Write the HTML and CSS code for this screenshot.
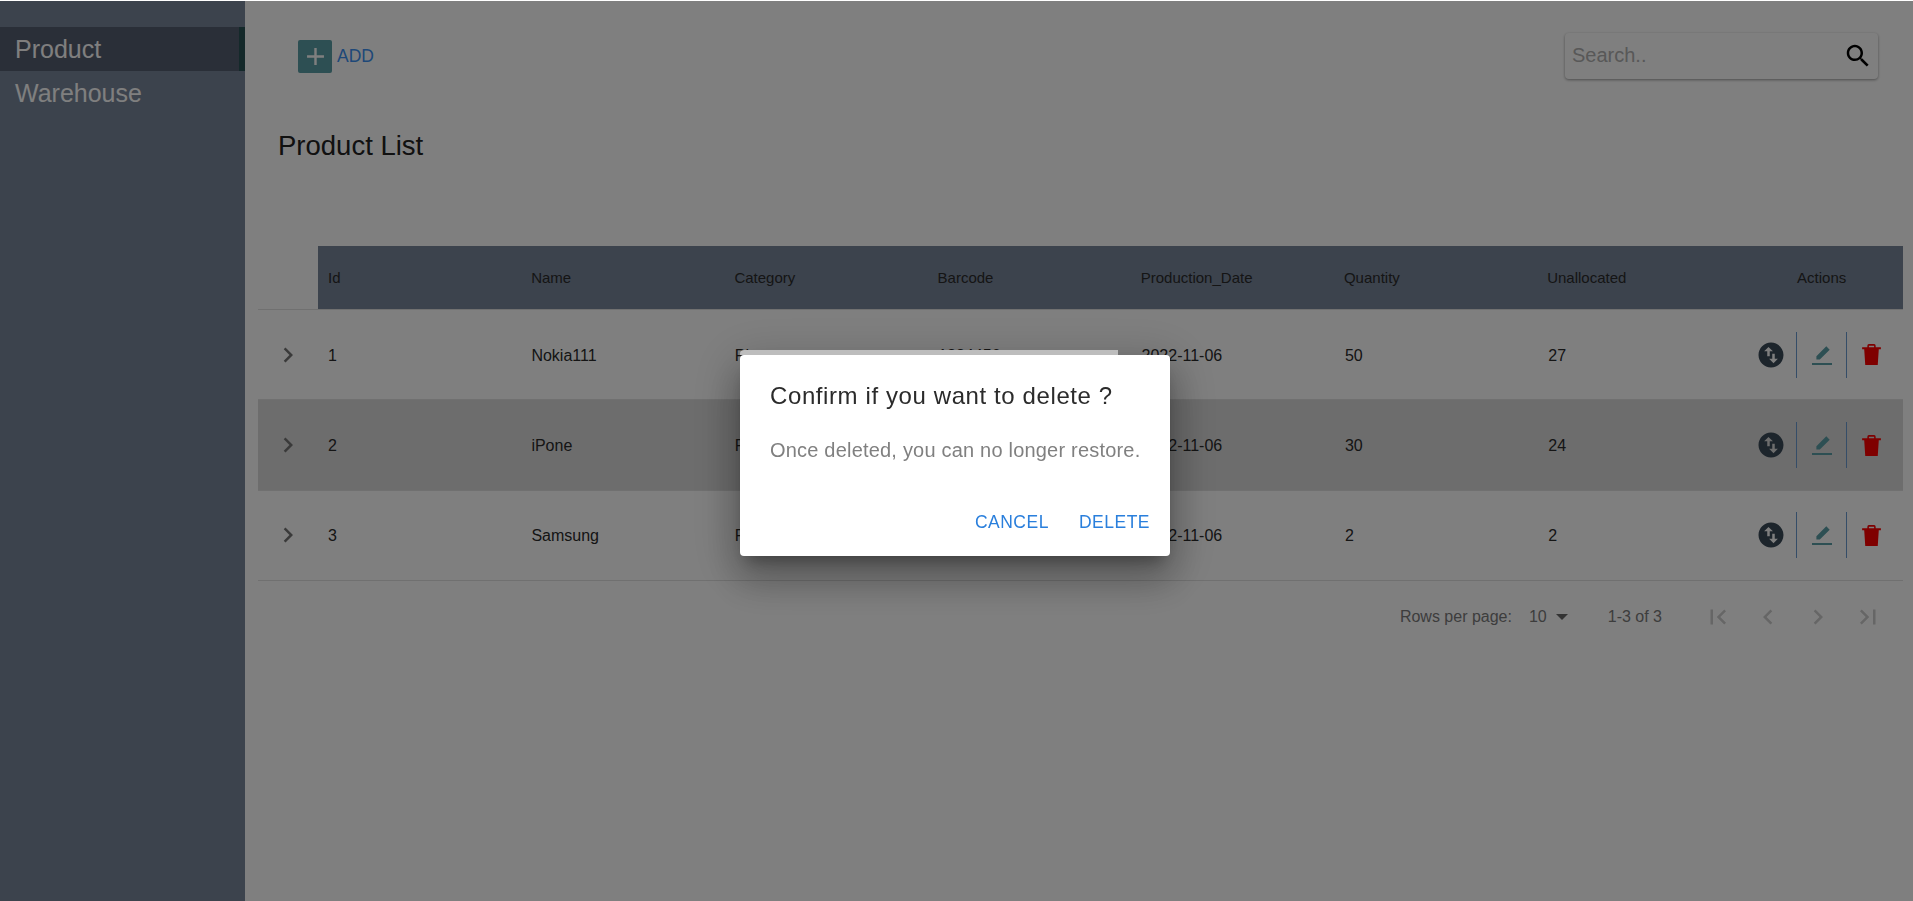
FILE: index.html
```html
<!DOCTYPE html>
<html lang="en">

<head>
    <meta charset="UTF-8">
    <meta name="viewport" content="width=device-width, initial-scale=1.0">
    <title>Product List</title>
    <link rel="stylesheet" href="styles.css">
</head>

<body>

    <div class="app">
        <nav class="sidebar">
            <a class="side-link active">Product</a>
            <a class="side-link">Warehouse</a>
        </nav>

        <main class="content">
            <div class="toolbar">
                <button class="add-button">
                    <span class="add-box">
                        <svg viewBox="0 0 24 24" width="29" height="29"><path d="M19 13h-6v6h-2v-6H5v-2h6V5h2v6h6v2z"/></svg>
                    </span>
                    <span>ADD</span>
                </button>
                <div class="search-box">
                    <span class="search-text">Search..</span>
                    <svg viewBox="0 0 24 24" width="30" height="30"><path d="M15.5 14h-.79l-.28-.27C15.41 12.59 16 11.11 16 9.5 16 5.91 13.09 3 9.5 3S3 5.91 3 9.5 5.91 16 9.5 16c1.61 0 3.09-.59 4.23-1.57l.27.28v.79l5 4.99L20.49 19l-4.99-5zm-6 0C7.01 14 5 11.99 5 9.5S7.01 5 9.5 5 14 7.01 14 9.5 11.99 14 9.5 14z"/></svg>
                </div>
            </div>

            <h2 class="page-title">Product List</h2>

            <div class="table">
                <div class="table-head">
                    <span class="cell">Id</span>
                    <span class="cell">Name</span>
                    <span class="cell">Category</span>
                    <span class="cell">Barcode</span>
                    <span class="cell">Production_Date</span>
                    <span class="cell">Quantity</span>
                    <span class="cell">Unallocated</span>
                    <span class="cell actions-head">Actions</span>
                </div>

                <div class="table-row">
                    <span class="expand"><svg viewBox="0 0 24 24" width="30" height="30"><path d="M10 6L8.59 7.41 13.17 12l-4.58 4.59L10 18l6-6z"/></svg></span>
                    <span class="cell">1</span>
                    <span class="cell">Nokia111</span>
                    <span class="cell">Phone</span>
                    <span class="cell">1234456</span>
                    <span class="cell">2022-11-06</span>
                    <span class="cell">50</span>
                    <span class="cell">27</span>
                    <span class="actions">
                        <span class="action">
                            <svg viewBox="0 0 24 24" width="30" height="30" class="icon-swap"><path d="M12 2C6.48 2 2 6.48 2 12s4.48 10 10 10 10-4.48 10-10S17.52 2 12 2zM6.5 9L10 5.5 13.500 9H11v4H9V9H6.500zm11 6L14 18.500 10.500 15H13v-4h2v4h2.500z"/></svg>
                        </span>
                        <span class="action bordered">
                            <svg viewBox="0 0 24 24" width="24" height="24" class="icon-edit"><path d="M2 20h20v2H2zM16.300 3.300l3.400 3.400-9.900 9.900H6.400v-3.400z"/></svg>
                        </span>
                        <span class="action last">
                            <svg viewBox="0 0 24 24" width="25" height="25" class="icon-trash"><path d="M3 5h18v2H3zM8 5V3.500A1.500 1.500 0 0 1 9.500 2h5A1.500 1.500 0 0 1 16 3.500V5h-1.500V3.500h-5V5zM5 7h14l-1 15H6z"/></svg>
                        </span>
                    </span>
                </div>

                <div class="table-row shaded">
                    <span class="expand"><svg viewBox="0 0 24 24" width="30" height="30"><path d="M10 6L8.59 7.41 13.17 12l-4.58 4.59L10 18l6-6z"/></svg></span>
                    <span class="cell">2</span>
                    <span class="cell">iPone</span>
                    <span class="cell">Phone</span>
                    <span class="cell">1234456</span>
                    <span class="cell">2022-11-06</span>
                    <span class="cell">30</span>
                    <span class="cell">24</span>
                    <span class="actions">
                        <span class="action">
                            <svg viewBox="0 0 24 24" width="30" height="30" class="icon-swap"><path d="M12 2C6.48 2 2 6.48 2 12s4.48 10 10 10 10-4.48 10-10S17.52 2 12 2zM6.5 9L10 5.5 13.500 9H11v4H9V9H6.500zm11 6L14 18.500 10.500 15H13v-4h2v4h2.500z"/></svg>
                        </span>
                        <span class="action bordered">
                            <svg viewBox="0 0 24 24" width="24" height="24" class="icon-edit"><path d="M2 20h20v2H2zM16.300 3.300l3.400 3.400-9.900 9.900H6.400v-3.400z"/></svg>
                        </span>
                        <span class="action last">
                            <svg viewBox="0 0 24 24" width="25" height="25" class="icon-trash"><path d="M3 5h18v2H3zM8 5V3.500A1.500 1.500 0 0 1 9.500 2h5A1.500 1.500 0 0 1 16 3.500V5h-1.500V3.500h-5V5zM5 7h14l-1 15H6z"/></svg>
                        </span>
                    </span>
                </div>

                <div class="table-row">
                    <span class="expand"><svg viewBox="0 0 24 24" width="30" height="30"><path d="M10 6L8.59 7.41 13.17 12l-4.58 4.59L10 18l6-6z"/></svg></span>
                    <span class="cell">3</span>
                    <span class="cell">Samsung</span>
                    <span class="cell">Phone</span>
                    <span class="cell">1234456</span>
                    <span class="cell">2022-11-06</span>
                    <span class="cell">2</span>
                    <span class="cell">2</span>
                    <span class="actions">
                        <span class="action">
                            <svg viewBox="0 0 24 24" width="30" height="30" class="icon-swap"><path d="M12 2C6.48 2 2 6.48 2 12s4.48 10 10 10 10-4.48 10-10S17.52 2 12 2zM6.5 9L10 5.5 13.500 9H11v4H9V9H6.500zm11 6L14 18.500 10.500 15H13v-4h2v4h2.500z"/></svg>
                        </span>
                        <span class="action bordered">
                            <svg viewBox="0 0 24 24" width="24" height="24" class="icon-edit"><path d="M2 20h20v2H2zM16.300 3.300l3.400 3.400-9.900 9.900H6.400v-3.400z"/></svg>
                        </span>
                        <span class="action last">
                            <svg viewBox="0 0 24 24" width="25" height="25" class="icon-trash"><path d="M3 5h18v2H3zM8 5V3.500A1.500 1.500 0 0 1 9.500 2h5A1.500 1.500 0 0 1 16 3.500V5h-1.500V3.500h-5V5zM5 7h14l-1 15H6z"/></svg>
                        </span>
                    </span>
                </div>

                <div class="pagination">
                    <span>Rows per page:</span>
                    <span class="page-size">10 <i class="caret"></i></span>
                    <span class="page-count">1-3 of 3</span>
                    <svg viewBox="0 0 24 24" width="30" height="30"><path d="M18.410 16.590L13.820 12l4.590-4.590L17 6l-6 6 6 6zM6 6h2v12H6z"/></svg>
                    <svg viewBox="0 0 24 24" width="30" height="30"><path d="M15.410 7.410L14 6l-6 6 6 6 1.410-1.410L10.830 12z"/></svg>
                    <svg viewBox="0 0 24 24" width="30" height="30"><path d="M10 6L8.590 7.410 13.170 12l-4.580 4.590L10 18l6-6z"/></svg>
                    <svg viewBox="0 0 24 24" width="30" height="30"><path d="M5.590 7.410L10.180 12l-4.590 4.590L7 18l6-6-6-6zM16 6h2v12h-2z"/></svg>
                </div>
            </div>
        </main>
    </div>

    <div class="backdrop"></div>

    <div class="dialog">
        <h3 class="dialog-title">Confirm if you want to delete ?</h3>
        <p class="dialog-text">Once deleted, you can no longer restore.</p>
        <div class="dialog-actions">
            <button class="dialog-button">CANCEL</button>
            <button class="dialog-button">DELETE</button>
        </div>
    </div>

</body>

</html>
```

FILE: styles.css
```css
* {
    box-sizing: border-box;
}

body {
    margin: 0;
    padding: 0;
    height: 901px;
    overflow: hidden;
    background-color: #fff;
    font-family: "Liberation Sans", Arial, sans-serif;
    color: #2a2a2a;
}

.app {
    display: flex;
    height: 100%;
    padding-top: 1px;
}

.sidebar {
    width: 245px;
    flex-shrink: 0;
    padding-top: 26px;
    background-color: #78869a;
}

.side-link {
    display: block;
    height: 44px;
    padding-left: 15px;
    line-height: 44px;
    font-size: 25px;
    color: #fff;
}

.side-link.active {
    background-color: #545e70;
    border-right: 6px solid #285254;
}

.content {
    flex: 1;
    min-width: 0;
}

.toolbar {
    display: flex;
    justify-content: space-between;
    height: 79px;
    padding: 32px 35px 0 53px;
}

.add-button {
    display: flex;
    align-items: center;
    gap: 5px;
    height: 33px;
    margin-top: 7px;
    padding: 0;
    background: none;
    border: none;
    font-family: inherit;
    font-size: 17.500px;
    color: #3c90f0;
}

.add-box {
    display: flex;
    align-items: center;
    justify-content: center;
    width: 34px;
    height: 33px;
    border-radius: 2px;
    background-color: #5b9ea6;
}

.add-box svg {
    fill: #fff;
}

.search-box {
    display: flex;
    align-items: center;
    justify-content: space-between;
    width: 313px;
    height: 46px;
    padding: 0 5px 0 7px;
    border-radius: 4px;
    box-shadow: 0 1px 3px rgba(0, 0, 0, 0.4);
}

.search-text {
    margin-bottom: 2px;
    font-size: 20px;
    color: #b0b0b0;
}

.page-title {
    margin: 50px 0 0 33px;
    font-size: 27.500px;
    line-height: 32px;
    font-weight: 400;
    color: #222;
}

.table {
    margin: 84px 0 0 13px;
    width: 1645px;
}

.table-head {
    display: flex;
    align-items: center;
    height: 64px;
    margin-left: 60px;
    padding-bottom: 1px;
    background-color: #78869a;
}

.cell {
    width: 203.400px;
    flex-shrink: 0;
    padding-left: 10px;
    font-size: 16px;
}

.table-head .cell {
    width: 203.200px;
    font-size: 15px;
}

.table-head .actions-head {
    padding-left: 0;
    width: 160px;
    text-align: right;
    padding-right: 54px;
}

.table-row {
    display: flex;
    align-items: center;
    height: 90.400px;
    padding-top: 2px;
    border-bottom: 1px solid #e0e0e0;
}

.table-head + .table-row {
    box-shadow: 0 -1px 0 #e0e0e0;
}

.table-row.shaded {
    background-color: #dadada;
}

.expand {
    display: flex;
    width: 60px;
    padding-left: 15px;
    margin-top: -2px;
    fill: #757575;
}

.actions {
    display: flex;
    align-items: center;
    margin-left: auto;
    margin-top: -2px;
    padding-right: 7px;
}

.action {
    display: flex;
    align-items: center;
    justify-content: center;
    width: 50px;
    height: 46px;
}

.action.bordered {
    width: 51px;
    border-left: 1px solid #6a9bd1;
    border-right: 1px solid #6a9bd1;
}

.action.last {
    width: 49px;
}

.icon-swap {
    fill: #3a4a58;
}

.icon-edit {
    fill: #5b9ea6;
}

.icon-trash {
    fill: #ff0000;
}

.pagination {
    display: flex;
    align-items: center;
    justify-content: flex-end;
    height: 72px;
    padding-right: 20px;
    font-size: 16px;
    color: #7a7a7a;
    fill: #cccccc;
}

.pagination svg {
    margin-left: 20px;
}

.page-size {
    display: flex;
    align-items: center;
    gap: 9px;
    margin-left: 17px;
    margin-right: 40px;
}

.page-count {
    margin-right: 21px;
}

.caret {
    width: 0;
    height: 0;
    border-left: 6px solid transparent;
    border-right: 6px solid transparent;
    border-top: 6px solid #666;
}

.backdrop {
    position: fixed;
    top: 1px;
    left: 0;
    right: 0;
    bottom: 0;
    background-color: rgba(0, 0, 0, 0.5);
}

/* strip that shows over the top edge of the dialog */
.dialog::before {
    content: '';
    position: absolute;
    top: -5px;
    left: 0;
    width: 378px;
    height: 5px;
    border-top-left-radius: 4px;
    background-color: #bdbdbd;
}

.dialog {
    position: fixed;
    top: 355px;
    left: 740px;
    width: 430px;
    height: 201px;
    border-radius: 4px;
    background-color: #fff;
    box-shadow: 0 11px 15px -7px rgba(0, 0, 0, 0.3), 0 24px 38px 3px rgba(0, 0, 0, 0.2), 0 9px 46px 8px rgba(0, 0, 0, 0.18);
}

.dialog-title {
    margin: 0;
    padding: 25px 10px 0 30px;
    font-size: 24px;
    line-height: 32px;
    font-weight: 400;
    letter-spacing: 0.6px;
    color: #2b2b2b;
}

.dialog-text {
    margin: 26px 0 0;
    padding: 0 10px 0 30px;
    font-size: 20px;
    line-height: 24px;
    letter-spacing: 0.2px;
    color: #808080;
}

.dialog-actions {
    display: flex;
    justify-content: flex-end;
    gap: 30px;
    margin-top: 50px;
    padding-right: 20px;
}

.dialog-button {
    padding: 0;
    background: none;
    border: none;
    font-family: inherit;
    font-size: 17.500px;
    letter-spacing: 0.5px;
    color: #2a7fdc;
}
```
